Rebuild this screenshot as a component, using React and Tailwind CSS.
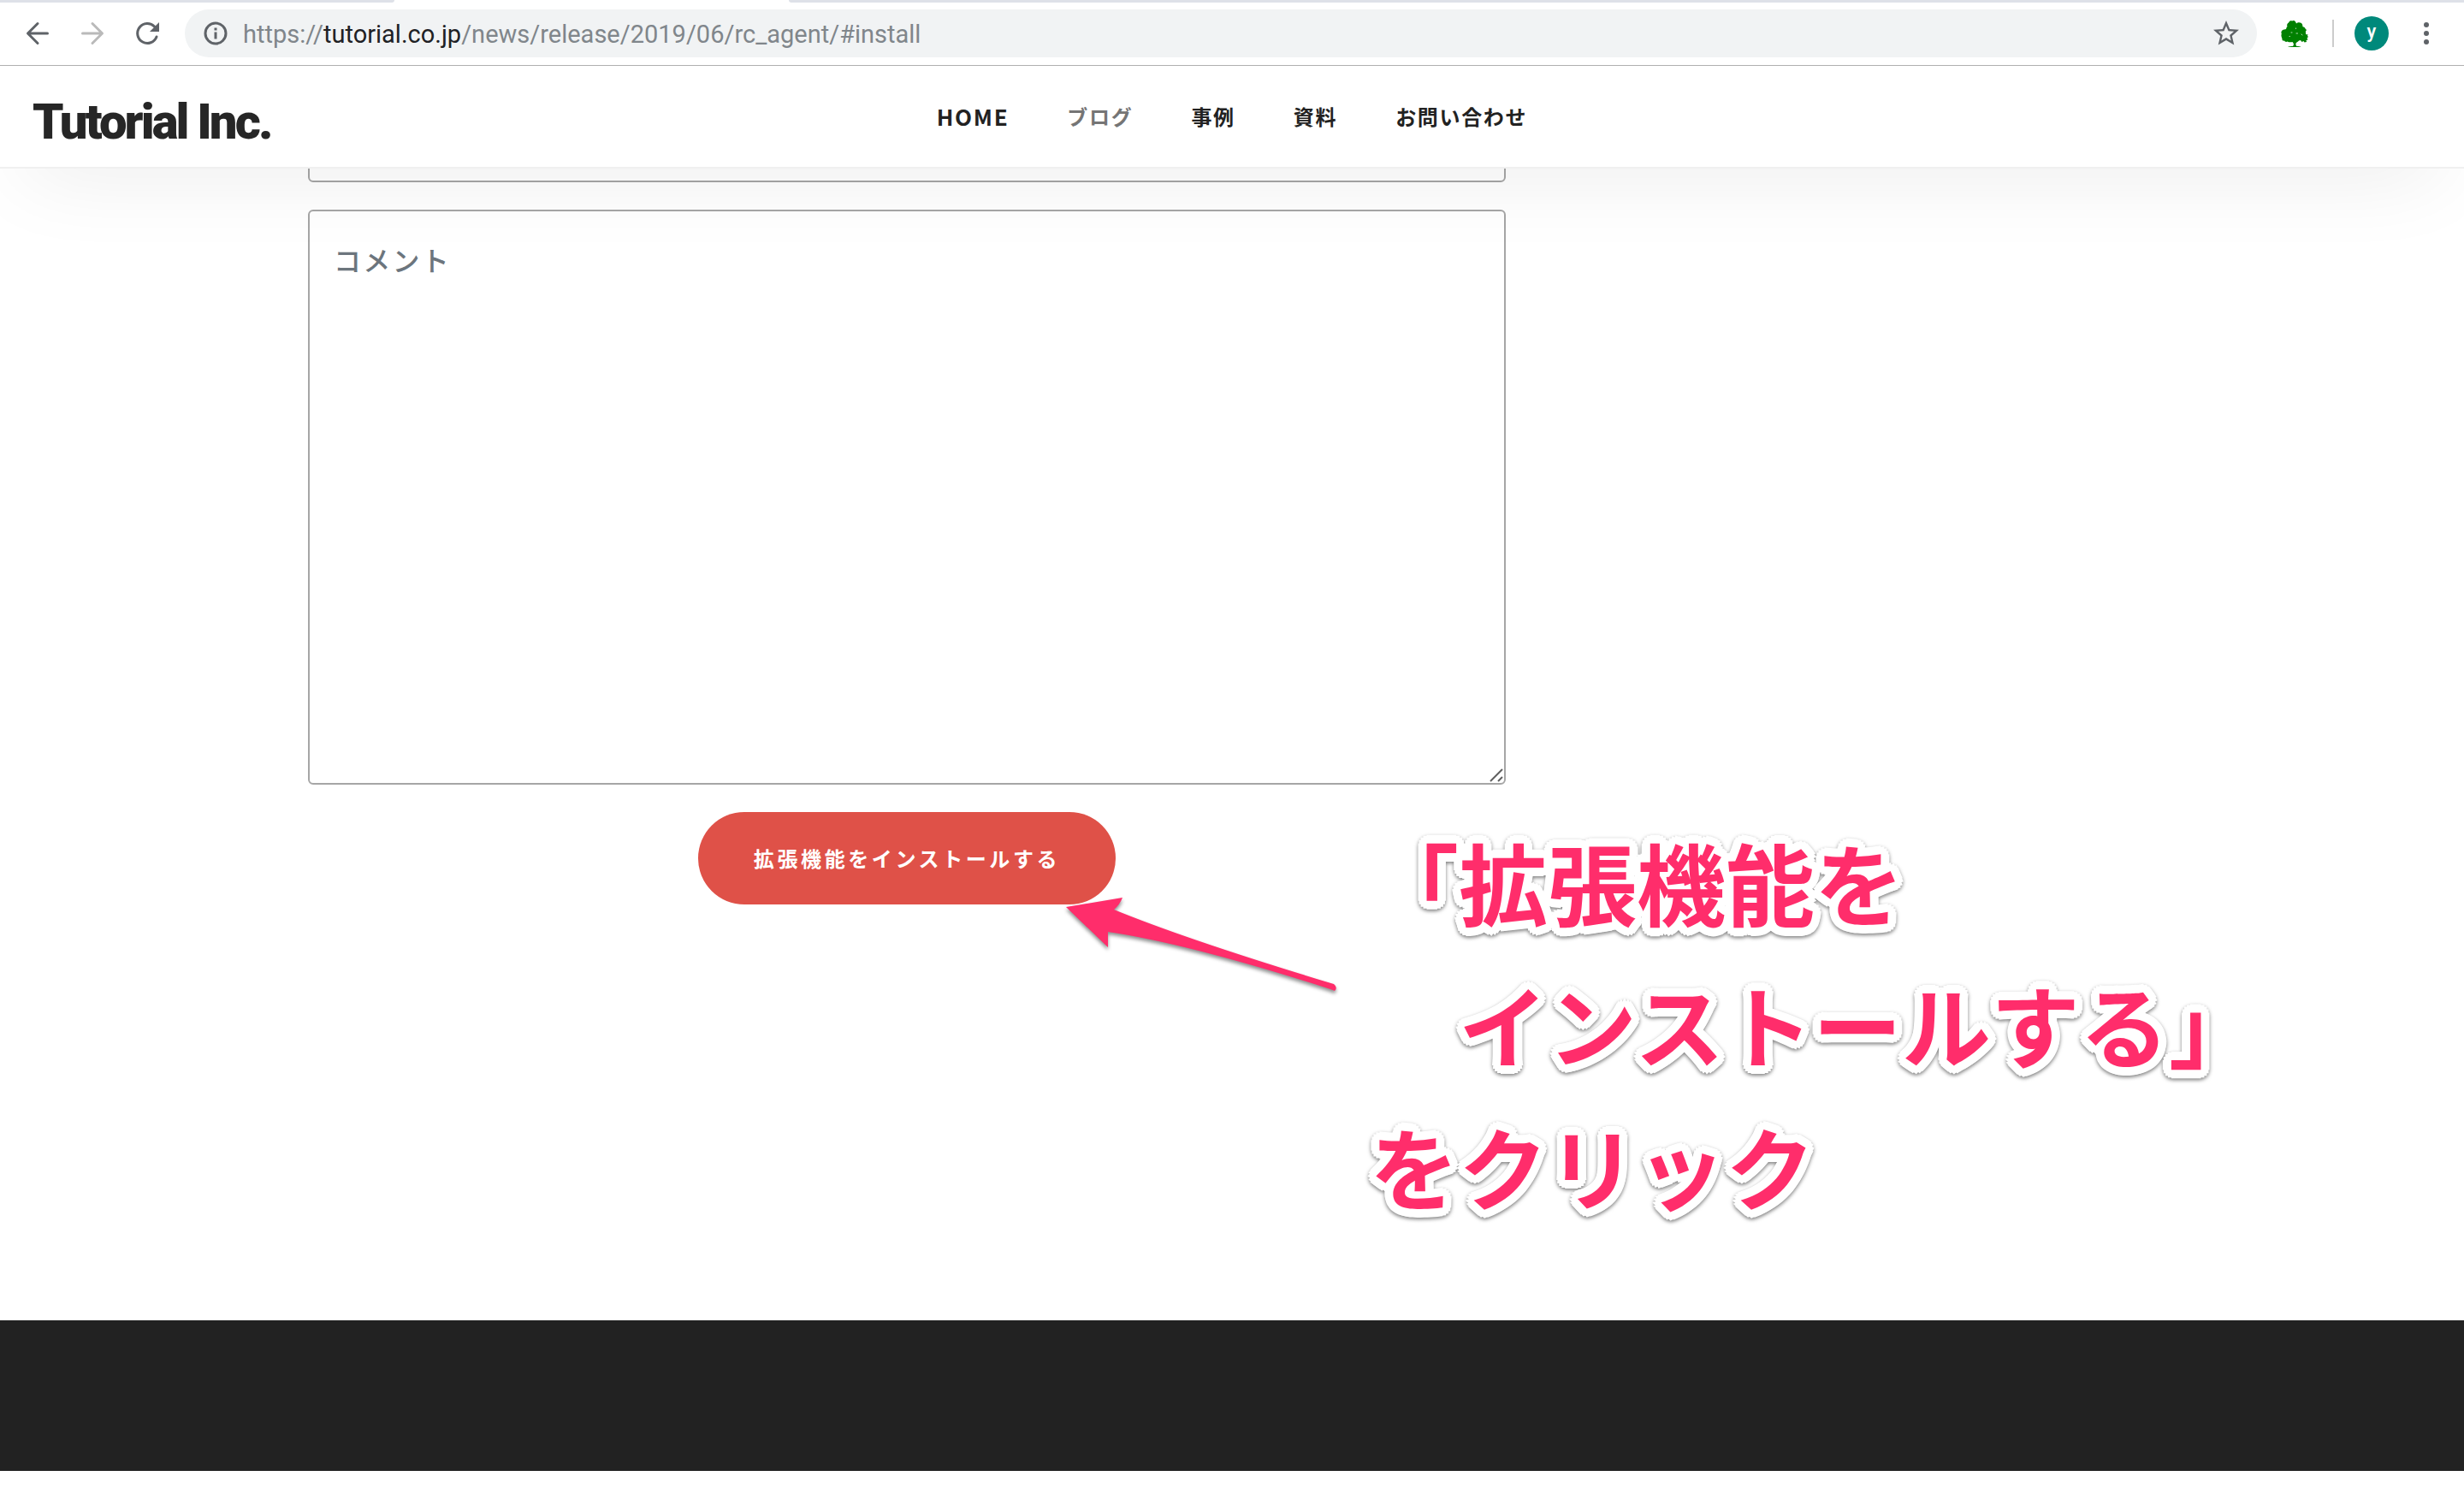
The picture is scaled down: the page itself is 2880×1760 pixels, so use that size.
const navItems = [
  { label: "HOME", href: "#home", style: "text-[26px]" },
  { label: "ブログ", href: "#blog", style: "text-[#757575]" },
  { label: "事例", href: "#cases", style: "" },
  { label: "資料", href: "#documents", style: "" },
  { label: "お問い合わせ", href: "#contact", style: "" },
];

function BackIcon() {
  return (
    <svg viewBox="0 0 32 32" className="size-8" fill="none" stroke="#5f6368" strokeWidth="3" strokeLinecap="round" strokeLinejoin="round">
      <path d="M27.500 16H5M16 4.500L4.500 16L16 27.500" />
    </svg>
  );
}

function ForwardIcon() {
  return (
    <svg viewBox="0 0 32 32" className="size-8" fill="none" stroke="#bababa" strokeWidth="3" strokeLinecap="round" strokeLinejoin="round">
      <path d="M4.500 16H27M16 4.500L27.500 16L16 27.500" />
    </svg>
  );
}

function ReloadIcon() {
  return (
    <svg viewBox="0 0 32 32" className="size-8" fill="none">
      <path d="M27 20A11.500 11.500 0 1 1 24.500 8" stroke="#5f6368" strokeWidth="3" strokeLinecap="round" />
      <path d="M30 3v11H19z" fill="#5f6368" />
    </svg>
  );
}

function InfoIcon() {
  return (
    <svg viewBox="0 0 28 28" className="size-7 shrink-0" fill="none">
      <circle cx="14" cy="14" r="12" stroke="#5f6368" strokeWidth="3" />
      <path d="M14 12.500v8M14 7.500v3" stroke="#5f6368" strokeWidth="3" />
    </svg>
  );
}

function StarIcon() {
  return (
    <svg viewBox="0 0 24 24" className="size-9" fill="#5f6368">
      <path d="M22 9.240l-7.190-.620L12 2 9.190 8.630 2 9.240l5.460 4.730L5.820 21 12 17.270 18.180 21l-1.630-7.030L22 9.240zM12 15.400l-3.760 2.270 1-4.280-3.320-2.880 4.380-.380L12 6.100l1.710 4.040 4.380.380-3.320 2.880 1 4.280L12 15.400z" />
    </svg>
  );
}

function TreeIcon() {
  return (
    <svg viewBox="0 0 32 32" className="size-8">
      <path
        fill="#008000"
        d="M9 3.500C10 1 12 1 13 1.500c1.500-1 3-.500 3.500.500 1 .500 1 1.500 1.500 2.500 2-2 6-1.500 7 1 .600 1.300 0 2.500 1 3 1 0 2 .500 2.500 2l1.500 1.500c-.500 1-1.500 1.500-1 3 0 1.500 0 2 1 2.500l1.500-.500-.500 2 1 1-1.500 1.500 1 2-2 .500.500 2-2.500.500-1-1.500-2 1-1.500-2-2 .500-1 1-1.500 1c-1.500.500-1.500 3.500 0 4.500 2 0 4 0 5 1H8c1-1 4-1 6-1 1.500-1.500 1-3.500-.500-5-2 .500-4 .500-6-.500-1.500 1-3 0-3.500-1-1.500.500-3-.500-2.500-2C.500 19.500 0 18 .800 16.500 0 15.500.500 13 1.500 12.500c1.500-1.500 3.500-1 4.500-1.500.500-1.500.500-2.500 1.500-3C6.500 6 7.500 4.500 9 3.500z"
      />
      <path stroke="#ffffff" strokeWidth="1" strokeLinecap="round" opacity="0.7" d="M17.500 10v.500M12 15h1M18 16h1.500M24 17l1 1M10 19.500h.500" />
    </svg>
  );
}

function MoreIcon() {
  return (
    <svg viewBox="0 0 32 32" className="size-8" fill="#5f6368">
      <circle cx="16" cy="6" r="3" />
      <circle cx="16" cy="16" r="3" />
      <circle cx="16" cy="26" r="3" />
    </svg>
  );
}

function BrowserToolbar() {
  return (
    <div className="relative z-20 border-b border-[#b0b0b0] bg-white">
      <div className="flex h-[3px] justify-between">
        <div className="w-[16%] rounded-br-sm bg-[#dee1e8]" />
        <div className="w-[68%] rounded-bl-sm bg-[#dee1e8]" />
      </div>
      <div className="flex h-[73px] items-center pt-2 pr-7 pb-[9px] pl-7">
        <div className="flex items-center gap-8">
          <button type="button" aria-label="戻る"><BackIcon /></button>
          <button type="button" aria-label="進む"><ForwardIcon /></button>
          <button type="button" aria-label="再読み込み"><ReloadIcon /></button>
        </div>
        <div className="ml-7 flex h-14 flex-1 items-center rounded-full bg-[#f1f3f4] pr-[18px] pl-[22px]">
          <InfoIcon />
          <div role="textbox" aria-label="アドレス" className="ml-[18px] flex-1 pt-[2px] font-[Roboto,sans-serif] text-[29px] leading-10 text-[#80868b]">
            https://<span className="text-[#202124]">tutorial.co.jp</span>/news/release/2019/06/rc_agent/#install
          </div>
          <button type="button" aria-label="ブックマーク"><StarIcon /></button>
        </div>
        <button type="button" aria-label="拡張機能" className="ml-7"><TreeIcon /></button>
        <div className="ml-7 h-8 w-[2px] bg-[#cccccc]" />
        <button type="button" aria-label="アカウント" className="ml-6 flex size-10 justify-center rounded-full bg-[#00897b] font-[Roboto,sans-serif] text-[22px] leading-9 font-medium text-white">
          y
        </button>
        <button type="button" aria-label="メニュー" className="ml-7"><MoreIcon /></button>
      </div>
    </div>
  );
}

function SiteHeader() {
  return (
    <header className="relative z-10 grid h-[120px] grid-cols-[1fr_auto_1fr] items-center border-b-2 border-[#f0f0f0] bg-white px-[38px] shadow-[0_30px_100px_-30px_rgba(0,0,0,0.1)]">
      <a href="#top" className="mt-3 justify-self-start font-[Roboto,sans-serif] text-[58px] leading-[64px] font-black tracking-tighter text-[#262626]">
        Tutorial Inc.
      </a>
      <nav className="flex items-center gap-[68px] text-[24px] leading-9 font-bold tracking-[0.07em] text-[#222222]">
        {navItems.map((item) => (
          <a key={item.label} href={item.href} className={item.style}>
            {item.label}
          </a>
        ))}
      </nav>
    </header>
  );
}

function InstallForm() {
  return (
    <form className="w-2/3 pr-10" onSubmit={(e) => e.preventDefault()}>
      <input type="text" aria-label="会社名" className="block h-[104px] w-full rounded-md border-2 border-[#a6a6a6] bg-white px-7 text-[32px]" />
      <div className="relative mt-8">
        <textarea
          aria-label="コメント"
          placeholder="コメント"
          className="block h-[672px] w-full resize-none rounded-md border-2 border-[#a6a6a6] bg-white px-7 py-8 text-[32px] leading-[48px] font-medium tracking-[0.07em] placeholder:text-[#6c757d]"
        />
        <svg viewBox="0 0 16 16" className="pointer-events-none absolute right-[3px] bottom-[3px] size-4" fill="none" stroke="#606060" strokeWidth="2">
          <path d="M1 15L15 1M10 15l5-5" />
        </svg>
      </div>
      <div className="mt-8 flex justify-center">
        <button type="submit" className="h-[108px] rounded-full bg-[#df5148] px-[65px] text-[24px] font-bold tracking-[0.15em] text-white">
          拡張機能をインストールする
        </button>
      </div>
    </form>
  );
}

function Annotation() {
  return (
    <>
      <svg viewBox="0 0 330 124" className="absolute top-[940px] left-[1240px] w-[330px] drop-shadow-[0_3px_2px_rgba(0,0,0,0.45)]" fill="#ff2d6b">
        <path d="M6 11L72 0Q69 8 62 14Q150 50 319 101Q324 105 320 109L315 107Q150 54 55 40L55 58Z" />
      </svg>
      <p className="absolute top-[838px] left-[1601px] text-[104px] leading-[166px] font-bold whitespace-pre text-[#ff2d6b] drop-shadow-[0_2px_2px_rgba(0,0,0,0.5)] [text-shadow:10px_0_white,9px_4px_white,7px_7px_white,4px_9px_white,0_10px_white,-4px_9px_white,-7px_7px_white,-9px_4px_white,-10px_0_white,-9px_-4px_white,-7px_-7px_white,-4px_-9px_white,0_-10px_white,4px_-9px_white,7px_-7px_white,9px_-4px_white]">
        {"「拡張機能を\n　インストールする」\nをクリック"}
      </p>
    </>
  );
}

export default function App() {
  return (
    <div lang="ja" className="min-h-screen bg-white font-['Noto_Sans_CJK_JP',sans-serif]">
      <BrowserToolbar />
      <SiteHeader />
      <main className="relative -mt-[88px] pb-[486px]">
        <div className="mx-auto max-w-[2160px]">
          <InstallForm />
        </div>
        <Annotation />
      </main>
      <footer className="h-44 bg-[#222222]" />
    </div>
  );
}
